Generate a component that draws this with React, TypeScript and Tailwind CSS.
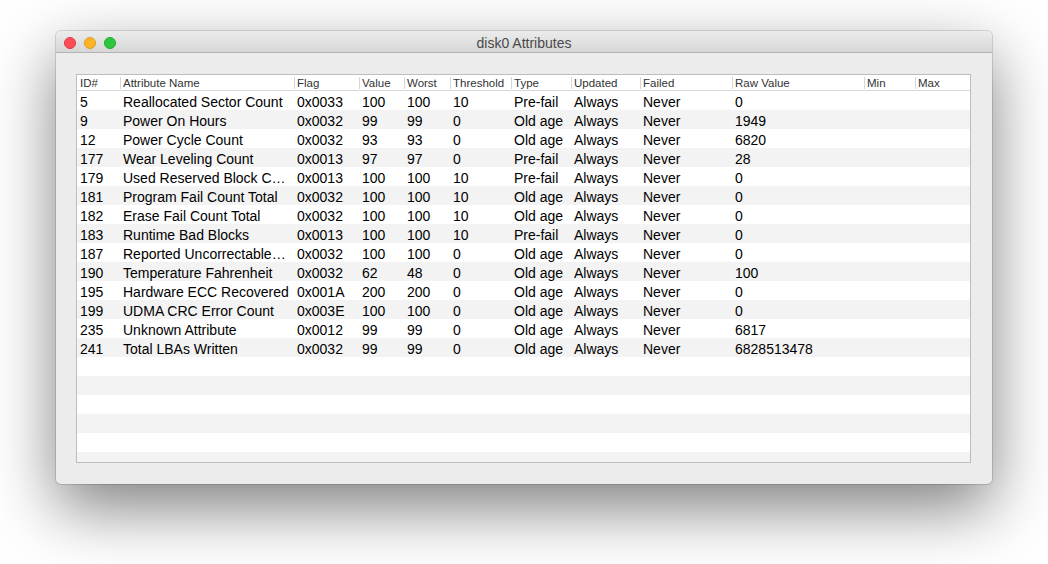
import React from "react";

const cols = [
  { name: "ID#", w: 43 },
  { name: "Attribute Name", w: 174 },
  { name: "Flag", w: 65 },
  { name: "Value", w: 45 },
  { name: "Worst", w: 46 },
  { name: "Threshold", w: 61 },
  { name: "Type", w: 60 },
  { name: "Updated", w: 69 },
  { name: "Failed", w: 92 },
  { name: "Raw Value", w: 132 },
  { name: "Min", w: 51 },
  { name: "Max", w: 55 },
];

const rows: string[][] = [
  ["5", "Reallocated Sector Count", "0x0033", "100", "100", "10", "Pre-fail", "Always", "Never", "0"],
  ["9", "Power On Hours", "0x0032", "99", "99", "0", "Old age", "Always", "Never", "1949"],
  ["12", "Power Cycle Count", "0x0032", "93", "93", "0", "Old age", "Always", "Never", "6820"],
  ["177", "Wear Leveling Count", "0x0013", "97", "97", "0", "Pre-fail", "Always", "Never", "28"],
  ["179", "Used Reserved Block C…", "0x0013", "100", "100", "10", "Pre-fail", "Always", "Never", "0"],
  ["181", "Program Fail Count Total", "0x0032", "100", "100", "10", "Old age", "Always", "Never", "0"],
  ["182", "Erase Fail Count Total", "0x0032", "100", "100", "10", "Old age", "Always", "Never", "0"],
  ["183", "Runtime Bad Blocks", "0x0013", "100", "100", "10", "Pre-fail", "Always", "Never", "0"],
  ["187", "Reported Uncorrectable…", "0x0032", "100", "100", "0", "Old age", "Always", "Never", "0"],
  ["190", "Temperature Fahrenheit", "0x0032", "62", "48", "0", "Old age", "Always", "Never", "100"],
  ["195", "Hardware ECC Recovered", "0x001A", "200", "200", "0", "Old age", "Always", "Never", "0"],
  ["199", "UDMA CRC Error Count", "0x003E", "100", "100", "0", "Old age", "Always", "Never", "0"],
  ["235", "Unknown Attribute", "0x0012", "99", "99", "0", "Old age", "Always", "Never", "6817"],
  ["241", "Total LBAs Written", "0x0032", "99", "99", "0", "Old age", "Always", "Never", "6828513478"],
];

const gridCols = "43px 174px 65px 45px 46px 61px 60px 69px 92px 132px 51px 55px";

export default function App() {
  const empty = Array.from({ length: 6 });
  return (
    <div
      className="w-[1048px] h-[564px] bg-white overflow-hidden pt-[31px] pl-[56px]"
      style={{ fontFamily: '"Liberation Sans", Arial, sans-serif' }}
    >
      <div className="w-[936px] h-[453px] flex flex-col rounded-[5px] bg-[#ececec] shadow-[0_24px_65px_rgba(0,0,0,0.5),0_0_0_1px_rgba(0,0,0,0.13)] overflow-hidden">
        {/* title bar */}
        <div className="relative h-[22px] flex items-center justify-center bg-gradient-to-b from-[#ececec] to-[#d6d6d6] border-b border-[#b4b4b4] shrink-0">
          <div className="absolute left-[8px] top-[6px] flex gap-[8px]">
            <div className="w-[12px] h-[12px] rounded-full bg-[#fc4f55] border border-[#e0393f]" />
            <div className="w-[12px] h-[12px] rounded-full bg-[#fdb426] border border-[#e09d1c]" />
            <div className="w-[12px] h-[12px] rounded-full bg-[#2cc73e] border border-[#1fab2e]" />
          </div>
          <span className="text-[14px] text-[#4a4a4a] leading-none pt-[3px]">disk0 Attributes</span>
        </div>
        {/* body */}
        <div className="flex-1 pt-[21px] pl-[20px] pr-[21px] pb-[21px]">
          <div className="w-[895px] h-[389px] border border-[#bdbdbd] bg-white overflow-hidden">
            <div
              className="grid h-[16px] border-b border-[#d9d9d9] bg-white"
              style={{ gridTemplateColumns: gridCols }}
            >
              {cols.map((c, i) => (
                <div key={c.name} className="relative flex items-center pl-[3px] pt-[2px] text-[11.5px] text-[#333] leading-none whitespace-nowrap">
                  {i > 0 && <div className="absolute left-0 top-[2px] h-[12px] w-px bg-[#d6d6d6]" />}
                  {c.name}
                </div>
              ))}
            </div>
            {rows.map((r, ri) => (
              <div
                key={ri}
                className={`grid h-[19px] ${ri % 2 === 1 ? "bg-[#f3f3f3]" : "bg-white"}`}
                style={{ gridTemplateColumns: gridCols }}
              >
                {r.map((v, ci) => (
                  <div
                    key={ci}
                    className="flex items-center pl-[3px] pt-[2px] text-[14px] text-black leading-none whitespace-nowrap"
                  >
                    {v}
                  </div>
                ))}
                <div />
                <div />
              </div>
            ))}
            {empty.map((_, i) => (
              <div key={"e" + i} className={`h-[19px] ${(rows.length + i) % 2 === 1 ? "bg-[#f3f3f3]" : "bg-white"}`} />
            ))}
          </div>
        </div>
      </div>
    </div>
  );
}
